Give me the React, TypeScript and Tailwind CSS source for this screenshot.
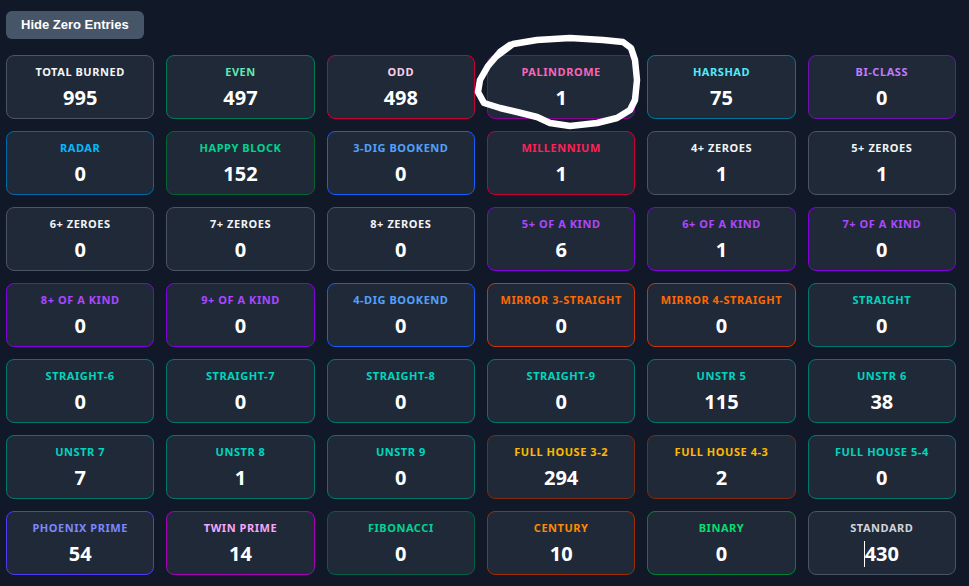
import React, { useState } from 'react';

interface Stat {
  label: string;
  value: number;
  text: string;
  border: string;
}

const stats: Stat[] = [
  { label: 'Total Burned', value: 995, text: 'text-gray-100', border: 'border-gray-600' },
  { label: 'Even', value: 497, text: 'text-emerald-300', border: 'border-emerald-700' },
  { label: 'Odd', value: 498, text: 'text-pink-200', border: 'border-rose-700' },
  { label: 'Palindrome', value: 1, text: 'text-pink-400', border: 'border-fuchsia-800' },
  { label: 'Harshad', value: 75, text: 'text-cyan-300', border: 'border-cyan-700' },
  { label: 'Bi-Class', value: 0, text: 'text-purple-400', border: 'border-purple-800' },

  { label: 'Radar', value: 0, text: 'text-sky-400', border: 'border-sky-700' },
  { label: 'Happy Block', value: 152, text: 'text-emerald-400', border: 'border-green-800' },
  { label: '3-Dig Bookend', value: 0, text: 'text-blue-400', border: 'border-blue-600' },
  { label: 'Millennium', value: 1, text: 'text-rose-500', border: 'border-rose-700' },
  { label: '4+ Zeroes', value: 1, text: 'text-gray-100', border: 'border-gray-600' },
  { label: '5+ Zeroes', value: 1, text: 'text-gray-100', border: 'border-gray-600' },

  { label: '6+ Zeroes', value: 0, text: 'text-gray-100', border: 'border-gray-600' },
  { label: '7+ Zeroes', value: 0, text: 'text-gray-100', border: 'border-gray-600' },
  { label: '8+ Zeroes', value: 0, text: 'text-gray-100', border: 'border-gray-600' },
  { label: '5+ of a Kind', value: 6, text: 'text-purple-500', border: 'border-purple-700' },
  { label: '6+ of a Kind', value: 1, text: 'text-purple-500', border: 'border-purple-700' },
  { label: '7+ of a Kind', value: 0, text: 'text-purple-500', border: 'border-purple-700' },

  { label: '8+ of a Kind', value: 0, text: 'text-purple-500', border: 'border-purple-700' },
  { label: '9+ of a Kind', value: 0, text: 'text-purple-500', border: 'border-purple-700' },
  { label: '4-Dig Bookend', value: 0, text: 'text-blue-400', border: 'border-blue-600' },
  { label: 'Mirror 3-Straight', value: 0, text: 'text-orange-500', border: 'border-orange-700' },
  { label: 'Mirror 4-Straight', value: 0, text: 'text-orange-500', border: 'border-orange-700' },
  { label: 'Straight', value: 0, text: 'text-teal-400', border: 'border-teal-700' },

  { label: 'Straight-6', value: 0, text: 'text-teal-400', border: 'border-teal-700' },
  { label: 'Straight-7', value: 0, text: 'text-teal-400', border: 'border-teal-700' },
  { label: 'Straight-8', value: 0, text: 'text-teal-400', border: 'border-teal-700' },
  { label: 'Straight-9', value: 0, text: 'text-teal-400', border: 'border-teal-700' },
  { label: 'Unstr 5', value: 115, text: 'text-teal-400', border: 'border-teal-700' },
  { label: 'Unstr 6', value: 38, text: 'text-teal-400', border: 'border-teal-700' },

  { label: 'Unstr 7', value: 7, text: 'text-teal-400', border: 'border-teal-700' },
  { label: 'Unstr 8', value: 1, text: 'text-teal-400', border: 'border-teal-700' },
  { label: 'Unstr 9', value: 0, text: 'text-teal-400', border: 'border-teal-700' },
  { label: 'Full House 3-2', value: 294, text: 'text-amber-400', border: 'border-orange-900' },
  { label: 'Full House 4-3', value: 2, text: 'text-amber-400', border: 'border-orange-900' },
  { label: 'Full House 5-4', value: 0, text: 'text-teal-400', border: 'border-teal-700' },

  { label: 'Phoenix Prime', value: 54, text: 'text-indigo-400', border: 'border-indigo-600' },
  { label: 'Twin Prime', value: 14, text: 'text-fuchsia-300', border: 'border-fuchsia-700' },
  { label: 'Fibonacci', value: 0, text: 'text-emerald-400', border: 'border-emerald-800' },
  { label: 'Century', value: 10, text: 'text-orange-400', border: 'border-orange-800' },
  { label: 'Binary', value: 0, text: 'text-green-400', border: 'border-green-700' },
  { label: 'Standard', value: 430, text: 'text-gray-300', border: 'border-gray-600' },
];

// hand-drawn highlight around the palindrome card
const scribble =
  '23,22 39,10 63,6 96,4 129,6 149,8 157,14 161,26 163,46 161,66 156,76 143,84 123,89 96,92 76,89 63,83 43,78 26,74 10,69 4,58 6,46 14,32 26,18 36,11';

const StatCard: React.FC<{ stat: Stat; caret?: boolean }> = ({ stat, caret }) => (
  <div
    className={`h-16 flex flex-col items-center justify-center pt-0.5 rounded-lg border bg-[#1f2937] ${stat.border}`}
  >
    <span className={`text-[11px] leading-4 font-bold uppercase tracking-wider ${stat.text}`}>
      {stat.label}
    </span>
    <span className="relative mt-1 text-xl leading-7 font-bold text-white">
      {caret && <span className="absolute -left-px top-px h-[26px] w-px bg-white" />}
      {stat.value}
    </span>
  </div>
);

export default function App() {
  const [hideZero, setHideZero] = useState(false);
  const visible = hideZero ? stats.filter((s) => s.value !== 0) : stats;

  return (
    <div className="relative min-h-screen bg-[#111827] pl-[6px] pr-[13px] pt-[11px] pb-[11px]">
      <button
        onClick={() => setHideZero(!hideZero)}
        className="h-7 rounded-md bg-[#475569] px-[15px] text-[13px] font-bold text-white"
        style={{ fontFamily: '"Liberation Sans", Arial, sans-serif' }}
      >
        {hideZero ? 'Show Zero Entries' : 'Hide Zero Entries'}
      </button>

      <div
        className="mt-4 grid grid-cols-6 gap-3"
        style={{ fontFamily: '"Noto Sans", "Open Sans", sans-serif' }}
      >
        {visible.map((s) => (
          <StatCard key={s.label} stat={s} caret={s.label === 'Standard'} />
        ))}
      </div>

      <svg
        className="pointer-events-none absolute left-[474px] top-[34px]"
        width="168"
        height="98"
        viewBox="0 0 168 98"
      >
        <polyline
          points={scribble}
          fill="none"
          stroke="white"
          strokeWidth="6.5"
          strokeLinejoin="round"
          strokeLinecap="round"
        />
      </svg>
    </div>
  );
}
